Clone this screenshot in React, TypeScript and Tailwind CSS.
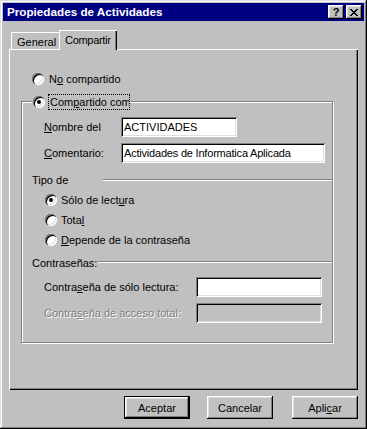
import React from "react";

const raised =
  "shadow-[inset_-1px_-1px_0_#000,inset_1px_1px_0_#fff,inset_-2px_-2px_0_#808080,inset_2px_2px_0_#dfdfdf]";
const sunken =
  "shadow-[inset_1px_1px_0_#808080,inset_-1px_-1px_0_#fff,inset_2px_2px_0_#000,inset_-2px_-2px_0_#dfdfdf]";

function Radio({ checked }: { checked?: boolean }) {
  return (
    <span className="w-[12px] h-[12px] shrink-0 rounded-full bg-white flex items-center justify-center shadow-[inset_1px_1px_0_#808080,inset_2px_2px_0_#000,inset_-1px_-1px_0_#fff,inset_-2px_-2px_0_#dfdfdf]">
      {checked && <span className="w-[4px] h-[4px] rounded-full bg-black" />}
    </span>
  );
}

function CloseGlyph() {
  const px: [number, number][] = [
    [0, 0], [1, 0], [6, 0], [7, 0],
    [1, 1], [2, 1], [5, 1], [6, 1],
    [2, 2], [3, 2], [4, 2], [5, 2],
    [3, 3], [4, 3],
    [2, 4], [3, 4], [4, 4], [5, 4],
    [1, 5], [2, 5], [5, 5], [6, 5],
    [0, 6], [1, 6], [6, 6], [7, 6],
  ];
  return (
    <svg width="8" height="7" viewBox="0 0 8 7" shapeRendering="crispEdges">
      {px.map(([x, y], i) => (
        <rect key={i} x={x} y={y} width="1" height="1" fill="#000" />
      ))}
    </svg>
  );
}

function Etched() {
  return <div className="flex-1 h-[2px] border-t border-t-[#808080] border-b border-b-white" />;
}

export default function App() {
  return (
    <div className="w-[367px] h-[429px] bg-[#c0c0c0] p-[3px] flex flex-col text-[11px] leading-[14px] text-black font-['Liberation_Sans',Arial,sans-serif] shadow-[inset_-1px_-1px_0_#000,inset_1px_1px_0_#dfdfdf,inset_-2px_-2px_0_#808080,inset_2px_2px_0_#fff]">
      {/* Title bar */}
      <div className="h-[18px] bg-[#000080] flex items-center pl-[4px] pr-[2px]">
        <span className="flex-1 text-white font-bold text-[11.7px] leading-none">
          Propiedades de Actividades
        </span>
        <div className={`w-[16px] h-[14px] bg-[#c0c0c0] flex items-center justify-center ${raised}`}>
          <span className="font-bold text-[11px] leading-none pt-[1px]">?</span>
        </div>
        <div className={`ml-[2px] w-[16px] h-[14px] bg-[#c0c0c0] flex items-center justify-center pt-[1px] ${raised}`}>
          <CloseGlyph />
        </div>
      </div>

      {/* Tabs */}
      <div className="mt-[9px] h-[19px] flex items-end pl-[8px]">
        <div className="w-[48px] h-[17px] pl-[6px] pt-[3px] shadow-[inset_1px_1px_0_#fff]">General</div>
        <div className="relative z-10 w-[58px] h-[20px] mb-[-1px] pl-[6px] pt-[3px] bg-[#c0c0c0] tracking-[-0.3px] shadow-[inset_1px_1px_0_#fff,inset_-1px_0_0_#000,inset_-2px_0_0_#808080]">
          Compartir
        </div>
      </div>

      {/* Panel */}
      <div className="ml-[6px] w-[349px] h-[341px] flex flex-col pt-[22px] shadow-[inset_1px_1px_0_#fff,inset_-1px_-1px_0_#000,inset_-2px_-2px_0_#808080]">
        <div className="h-[16px] flex items-center pl-[23px] gap-[5px]">
          <Radio />
          <span>
            N<u>o</u> compartido
          </span>
        </div>

        {/* Group box */}
        <div className="relative mt-[14px] ml-[12px] w-[312px] h-[242px] border border-[#808080] shadow-[1px_1px_0_#fff,inset_1px_1px_0_#fff] flex flex-col">
          <div className="absolute -top-[8px] left-[10px] h-[16px] px-[1px] bg-[#c0c0c0] flex items-center gap-[3px]">
            <Radio checked />
            <span className="w-[82px] h-[16px] border border-dotted border-black pl-[1px] overflow-hidden whitespace-nowrap leading-[14px]">
              Com<u>p</u>artido como
            </span>
          </div>

          <div className="mt-[15px] h-[20px] flex items-center pl-[22px]">
            <span className="w-[77px]">
              <u>N</u>ombre del
            </span>
            <div className={`w-[116px] h-[20px] bg-white pl-[3px] flex items-center ${sunken}`}>ACTIVIDADES</div>
          </div>

          <div className="mt-[6px] h-[20px] flex items-center pl-[22px]">
            <span className="w-[77px]">
              <u>C</u>omentario:
            </span>
            <div className={`w-[204px] h-[20px] bg-white pl-[3px] flex items-center tracking-[-0.2px] ${sunken}`}>
              Actividades de Informatica Aplicada
            </div>
          </div>

          <div className="mt-[10px] h-[14px] flex items-start pl-[10px]">
            <span className="w-[71px]">Tipo de</span>
            <div className="flex-1 mt-[6px] flex">
              <Etched />
            </div>
          </div>

          <div className="mt-[3px] flex flex-col pl-[23px]">
            <div className="h-[20px] flex items-center gap-[4px]">
              <Radio checked />
              <span>
                Sólo de lect<u>u</u>ra
              </span>
            </div>
            <div className="h-[20px] flex items-center gap-[4px]">
              <Radio />
              <span>
                Tota<u>l</u>
              </span>
            </div>
            <div className="h-[20px] flex items-center gap-[4px]">
              <Radio />
              <span>
                <u>D</u>epende de la contraseña
              </span>
            </div>
          </div>

          <div className="mt-[6px] h-[14px] flex items-start pl-[10px]">
            <span>Contraseñas:</span>
            <div className="flex-1 mt-[5px] ml-[1px] flex">
              <Etched />
            </div>
          </div>

          <div className="mt-[7px] h-[20px] flex items-center pl-[22px]">
            <span className="w-[152px]">
              Contra<u>s</u>eña de sólo lectura:
            </span>
            <div className={`w-[126px] h-[20px] bg-white ${sunken}`} />
          </div>

          <div className="mt-[6px] h-[20px] flex items-center pl-[22px]">
            <span className="w-[152px] text-[#808080] [text-shadow:1px_1px_0_#fff]">
              Contra<u>s</u>eña de acceso total:
            </span>
            <div className={`w-[126px] h-[20px] bg-[#c0c0c0] ${sunken}`} />
          </div>
        </div>
      </div>

      {/* Buttons */}
      <div className="mt-[6px] ml-[6px] w-[349px] h-[23px] flex justify-end">
        <div className="w-[66px] h-[23px] border border-black flex">
          <div className={`flex-1 flex items-center justify-center ${raised}`}>Aceptar</div>
        </div>
        <div className={`ml-[17px] w-[66px] h-[23px] flex items-center justify-center ${raised}`}>Cancelar</div>
        <div className={`ml-[19px] w-[66px] h-[23px] flex items-center justify-center ${raised}`}>
          <span>
            Apli<u>c</u>ar
          </span>
        </div>
      </div>
    </div>
  );
}
